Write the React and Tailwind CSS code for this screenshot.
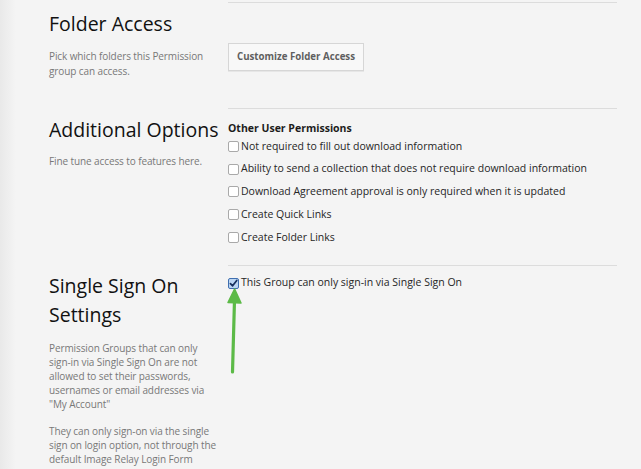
import React from "react";

const Box = ({ checked }) =>
  checked ? (
    <span className="relative inline-flex h-[11px] w-[11px] shrink-0 items-center justify-center rounded-[2px] border border-[#3f6fb0] bg-[#bcd6f3]">
      <svg viewBox="0 0 10 10" className="h-[9px] w-[9px]">
        <path d="M1.6 5.2 L4 7.6 L8.6 1.6" fill="none" stroke="#17305e" strokeWidth="1.9" strokeLinecap="round" strokeLinejoin="round" />
      </svg>
    </span>
  ) : (
    <span className="inline-block h-[11px] w-[11px] shrink-0 rounded-[2px] border border-[#a9a9a9] bg-white" />
  );

const Opt = ({ label }) => (
  <div className="flex h-[22.75px] items-center gap-[2px] text-[10.5px] text-[#262626]">
    <Box />
    <span>{label}</span>
  </div>
);

export default function App() {
  return (
    <div
      className="relative min-h-[469px] w-[641px] overflow-hidden bg-[linear-gradient(to_right,#e9e9e9_0px,#f4f4f4_16px)] pl-[49px] pr-[24px] pt-[2px]"
      style={{ fontFamily: '"Open Sans", "Liberation Sans", sans-serif' }}
    >
      {/* Folder Access */}
      <div className="flex h-[106px]">
        <div className="w-[179px] pt-[8px]">
          <h2 className="text-[19.5px] leading-[28px] text-[#111111]">Folder Access</h2>
          <p className="mt-[11px] w-[172px] text-[10px] leading-[15px] tracking-[-0.1px] text-[#787878]">
            Pick which folders this Permission group can access.
          </p>
        </div>
        <div className="flex-1 border-t border-[#dcdcdc] pt-[39px]">
          <button className="h-[28px] w-[136px] border border-[#d6d6d6] bg-[#f8f8f8] text-[9.7px] font-bold text-[#5f5f5f] shadow-[0_1px_0_#e6e6e6]">
            Customize Folder Access
          </button>
        </div>
      </div>

      {/* Additional Options */}
      <div className="flex h-[157px]">
        <div className="w-[179px] pt-[8px]">
          <h2 className="whitespace-nowrap text-[19.5px] leading-[28px] text-[#111111]">Additional Options</h2>
          <p className="mt-[10px] text-[10px] leading-[15px] tracking-[-0.1px] text-[#787878]">Fine tune access to features here.</p>
        </div>
        <div className="flex-1 border-t border-[#dcdcdc] pt-[12px]">
          <div className="text-[10.5px] font-bold leading-[14px] text-[#1c1c1c]">Other User Permissions</div>
          <Opt label="Not required to fill out download information" />
          <Opt label="Ability to send a collection that does not require download information" />
          <Opt label="Download Agreement approval is only required when it is updated" />
          <Opt label="Create Quick Links" />
          <Opt label="Create Folder Links" />
        </div>
      </div>

      {/* Single Sign On */}
      <div className="flex">
        <div className="w-[179px] pt-[6px]">
          <h2 className="text-[19.5px] leading-[29px] text-[#111111]">
            Single Sign On
            <br />
            Settings
          </h2>
          <p className="mt-[12px] w-[170px] text-[10px] leading-[14px] tracking-[-0.1px] text-[#787878]">
            Permission Groups that can only sign-in via Single Sign On are not allowed to set their passwords, usernames or email addresses via "My Account"
          </p>
          <p className="mt-[13px] w-[170px] text-[10px] leading-[14px] tracking-[-0.1px] text-[#787878]">
            They can only sign-on via the single sign on login option, not through the default Image Relay Login Form
          </p>
        </div>
        <div className="relative flex-1 border-t border-[#dcdcdc] pt-[9px]">
          <div className="flex h-[16px] items-center gap-[2px] text-[10.5px] text-[#262626]">
            <Box checked />
            <span>This Group can only sign-in via Single Sign On</span>
          </div>
          <svg className="absolute left-[-3px] top-[22px]" width="18" height="90" viewBox="0 0 18 90">
            <path d="M9.5 12 L7.5 84" stroke="#5cba47" strokeWidth="3.2" strokeLinecap="round" fill="none" />
            <path d="M9.6 1 L16 15 L3 14.6 Z" fill="#5cba47" stroke="#5cba47" strokeWidth="1.5" strokeLinejoin="round" />
          </svg>
        </div>
      </div>
    </div>
  );
}
